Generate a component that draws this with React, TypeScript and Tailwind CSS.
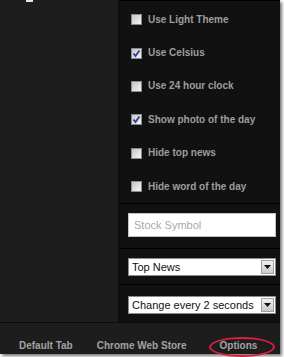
import React from "react";

const OPTIONS = [
  { label: "Use Light Theme", checked: false },
  { label: "Use Celsius", checked: true },
  { label: "Use 24 hour clock", checked: false },
  { label: "Show photo of the day", checked: true },
  { label: "Hide top news", checked: false },
  { label: "Hide word of the day", checked: false },
];

function Box({ checked }: { checked: boolean }) {
  return (
    <span className="w-[11px] h-[11px] flex-shrink-0 border border-[#8a8a8a] bg-gradient-to-br from-[#c4c4c4] to-[#f6f6f6] flex items-center justify-center">
      {checked && (
        <svg width="9" height="9" viewBox="0 0 9 9">
          <path d="M1.5 4.5 L3.5 7 L7.5 1.5" fill="none" stroke="#2d3f9c" strokeWidth="1.8" />
        </svg>
      )}
    </span>
  );
}

function FakeSelect({ value }: { value: string }) {
  return (
    <div className="w-[148px] h-[18px] bg-white border border-[#8c8c8c] flex items-center">
      <span className="flex-1 pl-[3px] text-[11px] leading-none text-[#111] whitespace-nowrap overflow-hidden">
        {value}
      </span>
      <span className="w-[13px] h-[14px] mr-[1px] border border-[#a0a0a0] bg-gradient-to-b from-[#f2f2f2] to-[#c9c9c9] flex items-center justify-center">
        <svg width="7" height="4" viewBox="0 0 7 4">
          <path d="M0 0 H7 L3.5 4 Z" fill="#111" />
        </svg>
      </span>
    </div>
  );
}

export default function App() {
  return (
    <div
      className="relative w-[284px] h-[357px] bg-white overflow-hidden"
      style={{ fontFamily: '"Liberation Sans", Arial, sans-serif' }}
    >
      <div className="w-[280px] h-[354px] flex flex-col bg-[#1d1d1d] shadow-[2px_2px_3px_rgba(0,0,0,0.55)]">
        {/* Main area */}
        <div className="flex h-[323px] border-b border-[#0c0c0c]">
          {/* Left column */}
          <div className="w-[118px] flex-shrink-0 bg-[#1d1d1d]">
            <div className="ml-[26px] w-[7px] h-[2px] bg-[#e6e6e6]" />
          </div>

          {/* Options panel */}
          <div className="flex-1 bg-[#111111] border-l border-[#0a0a0a] border-t border-t-black flex flex-col">
            <div className="pt-[2px]">
              {OPTIONS.map((o) => (
                <div key={o.label} className="h-[33.4px] flex items-center pl-[12px] gap-[6px]">
                  <Box checked={o.checked} />
                  <span className="text-[10px] font-bold text-[#9d9d9d] leading-none">{o.label}</span>
                </div>
              ))}
            </div>

            <div className="border-t border-black h-[45px] pt-[9px] pl-[9px]">
              <div className="w-[148px] h-[24px] bg-white border border-[#c4c4c4] flex items-center pl-[5px]">
                <span className="text-[11px] text-[#a9a9a9] leading-none">Stock Symbol</span>
              </div>
            </div>

            <div className="border-t border-black h-[36px] pt-[9px] pl-[9px]">
              <FakeSelect value="Top News" />
            </div>

            <div className="border-t border-black flex-1 pt-[11px] pl-[9px]">
              <FakeSelect value="Change every 2 seconds" />
            </div>
          </div>
        </div>

        {/* Footer */}
        <div className="flex-1 flex items-end pb-[3px] text-[10px] font-bold text-[#a3a3a3] leading-none">
          <span className="ml-[19px]">Default Tab</span>
          <span className="ml-[24px]">Chrome Web Store</span>
          <span className="ml-[33px]">Options</span>
        </div>
      </div>

      {/* Red highlight ring */}
      <div className="absolute left-[209px] top-[337px] w-[66px] h-[20px] rounded-[50%] border-2 border-[#d4213c]" />
    </div>
  );
}
